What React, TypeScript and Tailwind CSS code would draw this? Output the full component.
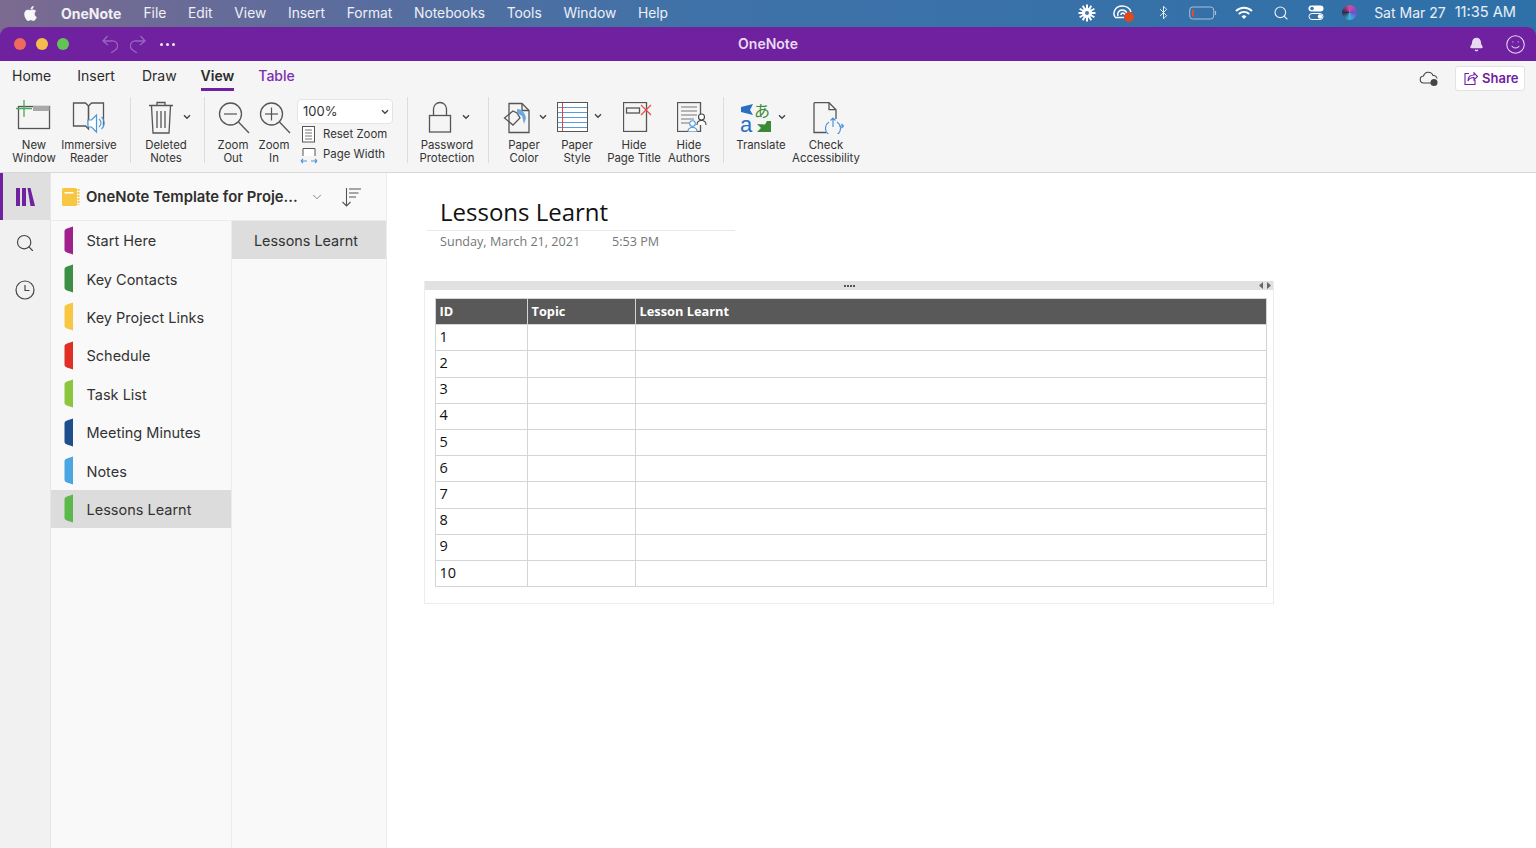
import React from "react";
import { FaApple } from "react-icons/fa";
import { ChevronDown, Bluetooth, Search, Bell, Smile } from "lucide-react";

const sans = "font-['Inter','Liberation_Sans',sans-serif]";

function Chev({ className = "" }: { className?: string }) {
  return (
    <svg width="8" height="6" viewBox="0 0 8 6" className={"shrink-0 " + className}>
      <path d="M1 1.300 4 4.300 7 1.300" fill="none" stroke="#444" strokeWidth="1.400" />
    </svg>
  );
}

function Sep({ className }: { className: string }) {
  return <div className={"w-px h-[66px] bg-[#dcdcdc] mt-[-3px] shrink-0 " + className} />;
}

function Tool({ w, label, icon }: { w: string; label: string[]; icon: React.ReactNode }) {
  return (
    <div className={"flex flex-col items-center shrink-0 " + w}>
      <div className="h-[38px] flex items-start justify-center shrink-0 whitespace-nowrap">{icon}</div>
      <div className="mt-[1px] flex flex-col items-center text-[11.400px] leading-[13px] text-[#333] whitespace-nowrap">
        {label.map((l) => (
          <span key={l}>{l}</span>
        ))}
      </div>
    </div>
  );
}

const stroke = { fill: "none", stroke: "#555", strokeWidth: 1.300 };

function NewWindowIcon() {
  return (
    <svg width="36" height="32" viewBox="0 0 36 32">
      <rect x="2.500" y="6.500" width="31" height="22" fill="#fff" {...stroke} />
      <rect x="17" y="6" width="16.500" height="5" fill="#a9a9a9" />
      <path d="M0 8.500h16M8 0v17" stroke="#47a85c" strokeWidth="1.300" />
    </svg>
  );
}
function ReaderIcon() {
  return (
    <svg width="36" height="34" viewBox="0 0 36 34">
      <path d="M2.500 3h12l3 3v23l-3-3h-12zM17.500 6l3-3h12v23" fill="#fff" {...stroke} />
      <path d="M17.500 6v19" {...stroke} />
      <path d="M17 20h3.500l5-5v17l-5-5H17z" fill="#fff" stroke="#4c95d9" strokeWidth="1.200" />
      <path d="M28 19a5 5 0 0 1 0 8M30.500 17a8 8 0 0 1 0 12" fill="none" stroke="#4c95d9" strokeWidth="1.100" />
    </svg>
  );
}
function TrashIcon() {
  return (
    <svg width="26" height="34" viewBox="0 0 26 34">
      <path d="M1 5.500h24M9 5.500V2.500h8v3M3.500 6l1.500 27h16L22.500 6M9 11v17M13 11v17M17 11v17" {...stroke} />
    </svg>
  );
}
function ZoomIcon({ plus, cx }: { plus?: boolean; cx: number }) {
  return (
    <svg width="34" height="34" viewBox="0 0 34 34">
      <circle cx={cx} cy="14" r="11" fill="#fff" {...stroke} />
      <path d={`M${cx + 8} 22l${33 - cx - 8} 11`} {...stroke} />
      <path d={`M${cx - 6.500} 14h13`} stroke="#555" strokeWidth="1.200" />
      {plus && <path d={`M${cx} 7.500v13`} stroke="#555" strokeWidth="1.200" />}
    </svg>
  );
}
function LockIcon() {
  return (
    <svg width="24" height="34" viewBox="0 0 24 34">
      <rect x="1.500" y="15.500" width="21" height="16.500" fill="#fff" {...stroke} />
      <path d="M5.500 15.500V9a6.500 6.500 0 0 1 13 0v6.500" {...stroke} />
    </svg>
  );
}
function PaperColorIcon() {
  return (
    <svg width="28" height="32" viewBox="0 0 28 32" className="mt-[2px]">
      <path d="M6 1.500h13l7 7v22H6z" fill="#fff" {...stroke} />
      <path d="M19 1.500v7h7" {...stroke} />
      <path d="M1.500 16 10 9l4 2 3 5-7 7z" fill="#fff" {...stroke} />
      <path d="M14 7c4 0 8 3 9 9l-2 6-2-8-5-3z" fill="#6aa9de" />
    </svg>
  );
}
function PaperStyleIcon() {
  return (
    <svg width="31" height="30" viewBox="0 0 31 30" className="mt-[2px]">
      <rect x="0.500" y="0.500" width="30" height="29" fill="#fff" stroke="#555" />
      <path d="M1 5.500h29M1 10.500h29M1 15.500h29M1 20.500h29M1 25.500h29" stroke="#5b9bd5" />
      <path d="M5.500 1v28" stroke="#e8413c" />
    </svg>
  );
}
function HideTitleIcon() {
  return (
    <svg width="30" height="30" viewBox="0 0 30 30" className="mt-[2px] ml-[8px]">
      <rect x="0.500" y="0.500" width="23" height="29" fill="#fff" {...stroke} />
      <rect x="3.500" y="6" width="13" height="5" fill="#fff" {...stroke} />
      <path d="M18 3l10 10M28 3 18 13" stroke="#ea4c3f" strokeWidth="1.200" />
    </svg>
  );
}
function HideAuthorsIcon() {
  return (
    <svg width="30" height="30" viewBox="0 0 30 30" className="mt-[2px] ml-[6px]">
      <rect x="0.500" y="0.500" width="23" height="29" fill="#fff" {...stroke} />
      <path d="M4 5h16M4 9h16M4 13h16M4 17h13M4 21h8" stroke="#777" />
      <circle cx="24.500" cy="15" r="3" fill="#fff" stroke="#444" strokeWidth="1.100" />
      <path d="M20 23c0-3 2-4.500 4.500-4.500S29 20 29 23" fill="#fff" stroke="#444" strokeWidth="1.100" />
      <circle cx="15.500" cy="21.500" r="2.800" fill="#fff" stroke="#4c95d9" strokeWidth="1.100" />
      <path d="M11 29.500c0-3 2-4 4.500-4s4.500 1 4.500 4" fill="#fff" stroke="#4c95d9" strokeWidth="1.100" />
    </svg>
  );
}
function TranslateIcon() {
  return (
    <svg width="32" height="32" viewBox="0 0 32 32" className="mt-[2px] overflow-visible">
      <path d="M1 5l12-3-3 6 3 5-12-3z" fill="#2a6fc4" />
      <text x="0" y="30" fontSize="22" fontFamily="Liberation Sans, sans-serif" fill="#2a6fc4">a</text>
      <text x="14" y="15" fontSize="16" fontFamily="Noto Sans CJK JP, sans-serif" fill="#3a8a35">あ</text>
      <path d="M31 19v11H17l4-4-4-4 8 .5 2-3.500z" fill="#3a8a35" />
    </svg>
  );
}
function AccessIcon() {
  return (
    <svg width="32" height="32" viewBox="0 0 32 32" className="mt-[2px] ml-[3px]">
      <path d="M2 .7h15l7 7V17M2 .7V30.500h12" fill="#fff" {...stroke} />
      <path d="M17 .7v7h7" {...stroke} />
      <path d="M17 20a7.500 7.500 0 1 0 8 0M21 16v9h0M18.500 18.500 21 16l2.500 2.500M27 24h4M29.500 22l2 2-2 2" fill="none" stroke="#4c95d9" strokeWidth="1.200" />
    </svg>
  );
}

function MenuBar() {
  return (
    <div className="h-[27px] flex items-center text-[13.800px] text-white/90 shrink-0 pb-[1px]">
      <FaApple className="ml-[22px] text-[17px] text-white/95" />
      <span className="ml-[22px] text-[14px] font-bold text-white/90">OneNote</span>
      <div className="ml-[22px] flex gap-[21.700px]">
        {["File", "Edit", "View", "Insert", "Format", "Notebooks", "Tools", "Window", "Help"].map((m) => (
          <span key={m}>{m}</span>
        ))}
      </div>
      <div className="ml-auto flex items-center">
        <svg width="18" height="18" viewBox="0 0 18 18" className="shrink-0">
          <circle cx="9" cy="9" r="5" fill="#fff" />
          <circle cx="9" cy="9" r="2" fill="#4a78ad" />
          {Array.from({ length: 12 }).map((_, i) => (
            <rect key={i} x="8" y="0.500" width="2" height="5" fill="#fff" transform={`rotate(${i * 30} 9 9)`} />
          ))}
        </svg>
        <svg width="24" height="20" viewBox="0 0 24 20" className="ml-[16px] shrink-0">
          <path d="M3 14c-3-5 1-11 7-11 5 0 8 3 9 6M6 13c-1-3 1-6 4-6 2 0 4 1 5 3M9 12c0-1 1-2 2-2l5 3" fill="none" stroke="#fff" strokeWidth="1.500" />
          <path d="M3 14.500h9" stroke="#fff" strokeWidth="1.500" />
          <circle cx="17" cy="14" r="5" fill="#dc4a22" />
        </svg>
        <Bluetooth size={15} strokeWidth={1.500} className="ml-[19.500px] text-white/90 shrink-0" />
        <svg width="28" height="14" viewBox="0 0 28 14" className="ml-[18.500px] shrink-0">
          <rect x="0.700" y="1" width="24" height="12" rx="3" fill="none" stroke="#a9c1d8" strokeWidth="1" />
          <rect x="3" y="3.500" width="2" height="7" fill="#de4b36" />
          <path d="M26.500 5v4" stroke="#a9c1d8" strokeWidth="1.200" />
        </svg>
        <svg width="18" height="14" viewBox="0 0 18 14" className="ml-[18px] shrink-0">
          <path d="M1 5a11.500 11.500 0 0 1 16 0M3.800 8a7.500 7.500 0 0 1 10.400 0" fill="none" stroke="#fff" strokeWidth="1.900" />
          <path d="M6.500 10.500a3.500 3.500 0 0 1 5 0L9 13z" fill="#fff" />
        </svg>
        <Search size={16} strokeWidth={1.700} className="ml-[19.500px] text-white/90 shrink-0" />
        <svg width="16" height="15" viewBox="0 0 16 15" className="ml-[19.500px] shrink-0">
          <rect x="0.500" y="0.500" width="15" height="6" rx="3" fill="#fff" />
          <circle cx="4" cy="3.500" r="1.800" fill="#3a74a6" />
          <rect x="1" y="8.500" width="14" height="6" rx="3" fill="none" stroke="#fff" />
          <circle cx="12" cy="11.500" r="2.200" fill="#fff" />
        </svg>
        <div className="ml-[18px] w-[15px] h-[15px] rounded-full shrink-0 bg-[conic-gradient(#d14fa0,#6a4fd0,#3fb6d8,#2c2c50,#d14fa0)]" />
        <div className="ml-[17px] mr-[20px] flex gap-[9px] text-[14px] whitespace-nowrap">
          <span>Sat Mar 27</span>
          <span className="text-[14.600px]">11:35 AM</span>
        </div>
      </div>
    </div>
  );
}

function TitleBar() {
  return (
    <div className="h-[34px] bg-[#6f21a0] rounded-t-[9px] flex items-center relative shrink-0">
      <div className="ml-[14px] w-[12px] h-[12px] rounded-full bg-[#ee6a5e]" />
      <div className="ml-[9.500px] w-[12px] h-[12px] rounded-full bg-[#f5bd4f]" />
      <div className="ml-[9.500px] w-[12px] h-[12px] rounded-full bg-[#61c454]" />
      <svg width="16" height="18" viewBox="0 0 16 18" className="ml-[33px]">
        <path d="M5.500 1 1 6l5 4M1 6h8.500a5 5 0 0 1 3 9.500L9 18" fill="none" stroke="#9a66bd" strokeWidth="1.300" />
      </svg>
      <svg width="16" height="18" viewBox="0 0 16 18" className="ml-[12px]">
        <path d="M10.500 1 15 6l-5 4M15 6H6.500a5 5 0 0 0-3 9.500L7 18" fill="none" stroke="#9a66bd" strokeWidth="1.300" />
      </svg>
      <div className="ml-[14px] flex gap-[3px]">
        <span className="w-[3px] h-[3px] rounded-full bg-[#eee]" />
        <span className="w-[3px] h-[3px] rounded-full bg-[#eee]" />
        <span className="w-[3px] h-[3px] rounded-full bg-[#eee]" />
      </div>
      <span className="absolute left-1/2 -translate-x-1/2 text-[14px] leading-[20px] font-semibold text-[#e8d9f2]">OneNote</span>
      <div className="ml-auto flex items-center gap-[21px] mr-[10px]">
        <Bell size={15} fill="#e8d9f2" stroke="#e8d9f2" />
        <Smile size={21} strokeWidth={1.200} stroke="#e8d9f2" />
      </div>
    </div>
  );
}

function Ribbon() {
  return (
    <div className="h-[112px] bg-[#f5f5f5] border-b border-[#d8d8d8] shrink-0 flex flex-col">
      <div className="h-[34px] flex items-start pl-[12px] pr-[11px] shrink-0 relative">
        <div className="flex items-start gap-[26px] text-[14px] leading-[20px] text-[#2b2b2b] pt-[5px]">
          <span>Home</span>
          <span>Insert</span>
          <span className="ml-[1px]">Draw</span>
          <span className="ml-[-2px] font-semibold border-b-[3px] border-[#6f21a0] h-[25px]">View</span>
          <span className="ml-[-2px] font-medium text-[#7b2fb0]">Table</span>
        </div>
        <svg width="20" height="16" viewBox="0 0 20 16" className="ml-auto mt-[10px] shrink-0">
          <path d="M12 12H5a3.500 3.500 0 0 1-.5-7A5 5 0 0 1 14 4.500a3.500 3.500 0 0 1 4 3" fill="none" stroke="#444" strokeWidth="1.100" />
          <circle cx="15" cy="11.500" r="3.500" fill="#444" />
        </svg>
        <div className="ml-[16px] mt-[5px] h-[25px] w-[70px] bg-white border border-[#e2e2e2] rounded-[3px] flex items-center pl-[8px] text-[13px] font-semibold text-[#6f21a0] shrink-0">
          <svg width="14" height="13" viewBox="0 0 14 13" className="shrink-0">
            <path d="M5 1.500H1v11h10V8M4 9c0-4 2-6 6-6V.8L13.500 4.500 10 8V5.500C7 5.500 5 6.500 4 9z" fill="none" stroke="#6f21a0" strokeWidth="1.100" />
          </svg>
          <span className="ml-[4px]">Share</span>
        </div>
      </div>
      <div className="flex items-start pl-[8px] pt-[5px]">
        <Tool w="w-[52px]" label={["New", "Window"]} icon={<NewWindowIcon />} />
        <Tool w="w-[58px]" label={["Immersive", "Reader"]} icon={<ReaderIcon />} />
        <Sep className="ml-[12px]" />
        <Tool
          w="w-[70px]"
          label={["Deleted", "Notes"]}
          icon={
            <div className="flex items-center gap-[9px] ml-[-7px]">
              <TrashIcon />
              <Chev className="mr-[-14px]" />
            </div>
          }
        />
        <Sep className="ml-[3px]" />
        <Tool w="w-[56px]" label={["Zoom", "Out"]} icon={<ZoomIcon cx={14.500} />} />
        <Tool w="w-[26px]" label={["Zoom", "In"]} icon={<ZoomIcon plus cx={14.500} />} />
        <div className="ml-[10px] w-[96px] flex flex-col shrink-0 text-[11.400px] text-[#333] mt-[-1px]">
          <div className="h-[25px] bg-white border border-[#e4e4e4] rounded-[4px] flex items-center pl-[5px] pr-[3px] text-[13px]">
            <span>100%</span>
            <Chev className="ml-auto" />
          </div>
          <div className="flex items-center h-[19px] whitespace-nowrap mt-[1px]">
            <svg width="14" height="17" viewBox="0 0 14 17" className="ml-[5px] shrink-0">
              <rect x="0.500" y="0.500" width="12" height="15.500" fill="#fff" stroke="#555" />
              <path d="M3 4h7M3 7h7M3 10h7M3 13h7" stroke="#777" />
            </svg>
            <span className="ml-[7px]">Reset Zoom</span>
          </div>
          <div className="flex items-center h-[20px] whitespace-nowrap mt-[1px]">
            <svg width="18" height="17" viewBox="0 0 18 17" className="ml-[3px] shrink-0">
              <path d="M3 9V1.500h12V9" fill="#fff" stroke="#555" />
              <path d="M1 14h6M1 14l2-2M1 14l2 2M11 14h6M17 14l-2-2M17 14l-2 2" fill="none" stroke="#4c95d9" strokeWidth="1.100" />
            </svg>
            <span className="ml-[5px]">Page Width</span>
          </div>
        </div>
        <Sep className="ml-[14px]" />
        <Tool
          w="w-[78px]"
          label={["Password", "Protection"]}
          icon={
            <div className="flex items-center gap-[10px] ml-[-4px]">
              <LockIcon />
              <Chev className="mr-[-8px]" />
            </div>
          }
        />
        <Sep className="ml-[2px]" />
        <Tool
          w="w-[70px]"
          label={["Paper", "Color"]}
          icon={
            <div className="flex items-center gap-[8px] ml-[2px]">
              <PaperColorIcon />
              <Chev />
            </div>
          }
        />
        <Tool
          w="w-[36px]"
          label={["Paper", "Style"]}
          icon={
            <div className="flex items-center gap-[6px] ml-[5px]">
              <PaperStyleIcon />
              <Chev />
            </div>
          }
        />
        <Tool w="w-[78px]" label={["Hide", "Page Title"]} icon={<HideTitleIcon />} />
        <Tool w="w-[32px]" label={["Hide", "Authors"]} icon={<HideAuthorsIcon />} />
        <Sep className="ml-[18px]" />
        <Tool
          w="w-[74px]"
          label={["Translate"]}
          icon={
            <div className="flex items-center gap-[6px] ml-[4px]">
              <TranslateIcon />
              <Chev />
            </div>
          }
        />
        <Tool w="w-[56px]" label={["Check", "Accessibility"]} icon={<AccessIcon />} />
      </div>
    </div>
  );
}

const sections: { name: string; color: string }[] = [
  { name: "Start Here", color: "#a0208c" },
  { name: "Key Contacts", color: "#3d8f45" },
  { name: "Key Project Links", color: "#f7c744" },
  { name: "Schedule", color: "#df2f26" },
  { name: "Task List", color: "#8cc63f" },
  { name: "Meeting Minutes", color: "#1f4e8c" },
  { name: "Notes", color: "#4aa5e0" },
  { name: "Lessons Learnt", color: "#5cb84a" },
];

function SectionTab({ color }: { color: string }) {
  return (
    <svg width="10" height="29" viewBox="0 0 10 29" className="shrink-0">
      <path d="M9 0.500v28L3 26.500c-1.500-.5-2.500-1-2.500-3V5.500c0-2 1-2.500 2.500-3z" fill={color} />
    </svg>
  );
}

function Sidebar() {
  return (
    <div className="flex shrink-0 h-full">
      <div className="w-[51px] bg-[#f1f1f1] border-r border-[#e6e6e6] flex flex-col items-center shrink-0">
        <div className="w-full h-[47px] bg-[#dfdfdf] border-l-[3px] border-[#6f21a0] flex items-center justify-center pr-[3px]">
          <svg width="19" height="18" viewBox="0 0 19 18">
            <path d="M0 0h4v18H0zM6 0h4v18H6zM11.500 0h3L19 18h-4.500z" fill="#6f21a0" />
          </svg>
        </div>
        <Search size={20} strokeWidth={1.400} className="mt-[13px] text-[#444]" />
        <svg width="20" height="20" viewBox="0 0 20 20" className="mt-[27px]">
          <circle cx="10" cy="10" r="9" fill="none" stroke="#444" strokeWidth="1.200" />
          <path d="M10 5v5.500h4.500" fill="none" stroke="#444" strokeWidth="1.200" />
        </svg>
      </div>
      <div className="w-[336px] flex flex-col border-r border-[#ececec]">
        <div className="h-[48px] bg-[#f9f9f9] border-b border-[#ececec] flex items-center shrink-0 pl-[11px] pt-[1px]">
          <svg width="18" height="18" viewBox="0 0 18 18" className="shrink-0">
            <rect x="0" y="0" width="15" height="18" rx="1.500" fill="#f7c744" />
            <rect x="2.500" y="4" width="9" height="1.500" fill="#fff" />
            <path d="M16.500 1v16" stroke="#f7c744" strokeWidth="2" strokeDasharray="2 1" />
          </svg>
          <span className="ml-[6px] text-[14.800px] font-semibold text-[#2e2e2e] whitespace-nowrap">OneNote Template for Proje...</span>
          <ChevronDown size={14} strokeWidth={1.300} className="ml-[12px] text-[#666] shrink-0" />
          <svg width="20" height="20" viewBox="0 0 20 20" className="ml-[18px] shrink-0">
            <path d="M4.500 1v18M.5 15l4 4 4-4M7 2h12M7 6h9.500M7 10h7" fill="none" stroke="#555" strokeWidth="1.100" />
          </svg>
        </div>
        <div className="flex flex-1 min-h-0">
          <div className="w-[181px] bg-[#f9f9f9] border-r border-[#ececec] flex flex-col shrink-0">
            {sections.map((s) => (
              <div
                key={s.name}
                className={
                  "h-[38.400px] flex items-center pl-[13px] gap-[12.500px] text-[14.500px] text-[#333] shrink-0 " +
                  (s.name === "Lessons Learnt" ? "bg-[#dcdcdc]" : "")
                }
              >
                <SectionTab color={s.color} />
                <span className="mt-[2px]">{s.name}</span>
              </div>
            ))}
          </div>
          <div className="flex-1 bg-[#f9f9f9]">
            <div className="h-[38.400px] bg-[#dddddd] flex items-center justify-center pr-[6px] pt-[1px] text-[14.400px] text-[#333]">Lessons Learnt</div>
          </div>
        </div>
      </div>
    </div>
  );
}

const cell = "border border-[#d4d4d4] pl-[3.500px] pr-[4px] py-0 h-[26.200px] text-left align-middle";

function Note() {
  return (
    <div className="flex-1 bg-white pl-[37px] font-['Open_Sans',sans-serif] min-w-0">
      <div className="w-[308px] ml-[3px] mt-[21px] border-b border-[#e8e8e8] h-[37px] pl-[13px] text-[24px] leading-[35px] text-[#111] whitespace-nowrap">
        Lessons Learnt
      </div>
      <div className="ml-[16px] mt-[2px] h-[18px] flex text-[12.600px] leading-[18px] text-[#767676]">
        <span className="w-[172px]">Sunday, March 21, 2021</span>
        <span>5:53 PM</span>
      </div>
      <div className="mt-[30px] w-[850px] h-[323px] border border-[#ececec]">
        <div className="h-[9px] mt-[-1px] bg-[#e1e1e1] relative flex items-center justify-center">
          <div className="flex gap-[1px]">
            <span className="w-[2px] h-[2px] bg-[#555]" />
            <span className="w-[2px] h-[2px] bg-[#555]" />
            <span className="w-[2px] h-[2px] bg-[#555]" />
            <span className="w-[2px] h-[2px] bg-[#555]" />
          </div>
          <svg width="12" height="7" viewBox="0 0 12 7" className="absolute right-[2px] top-[1px]">
            <path d="M4 0v7L0 3.500zM8 0v7l4-3.500z" fill="#666" />
          </svg>
        </div>
        <table className="ml-[10px] mt-[8px] w-[832px] table-fixed border-collapse text-[14.500px] text-[#111]">
          <colgroup>
            <col className="w-[92px]" />
            <col className="w-[108px]" />
            <col />
          </colgroup>
          <thead>
            <tr className="bg-[#595959] text-white text-[12.800px]">
              <th className={cell + " font-bold"}>ID</th>
              <th className={cell + " font-bold"}>Topic</th>
              <th className={cell + " font-bold"}>Lesson Learnt</th>
            </tr>
          </thead>
          <tbody>
            {[1, 2, 3, 4, 5, 6, 7, 8, 9, 10].map((n) => (
              <tr key={n}>
                <td className={cell + " pb-[2px]"}>{n}</td>
                <td className={cell}></td>
                <td className={cell}></td>
              </tr>
            ))}
          </tbody>
        </table>
      </div>
    </div>
  );
}

export default function App() {
  return (
    <div className={"w-[1536px] h-[848px] overflow-hidden flex flex-col bg-[linear-gradient(90deg,#7c6a90_0%,#5d6c9c_20%,#3f72a8_45%,#2e70a8_100%)] " + sans}>
      <MenuBar />
      <TitleBar />
      <Ribbon />
      <div className="flex flex-1 min-h-0">
        <Sidebar />
        <Note />
      </div>
    </div>
  );
}
